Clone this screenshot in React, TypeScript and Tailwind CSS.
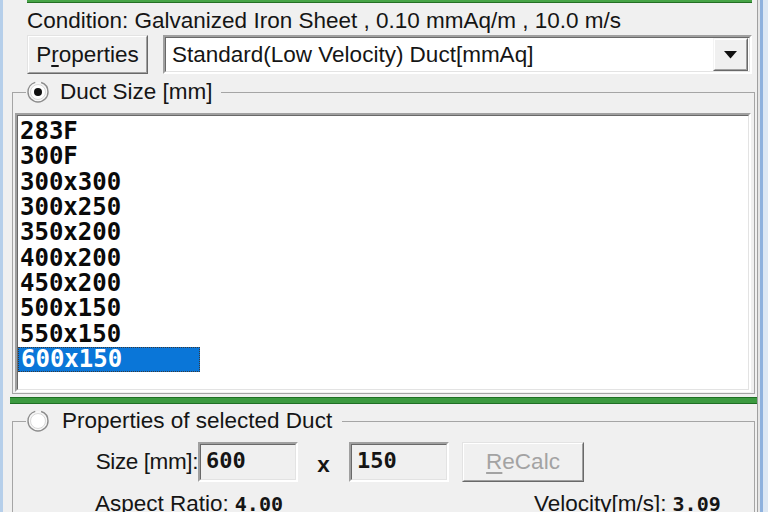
import React from 'react';

const sizes = ['283F', '300F', '300x300', '300x250', '350x200', '400x200', '450x200', '500x150', '550x150', '600x150'];

function Radio({ checked }: { checked?: boolean }) {
  return (
    <svg width="24" height="24" viewBox="0 0 24 24" className="shrink-0">
      <circle cx="12" cy="12" r="10" fill="#f7f7f7" stroke="#8c8c8c" strokeWidth="1.4" strokeDasharray="44 6" />
      <circle cx="12" cy="12" r="7.5" fill="#ffffff" stroke="#d9d9d9" strokeWidth="1" />
      {checked && <circle cx="12" cy="12" r="4" fill="#111111" />}
    </svg>
  );
}

// classic raised 3D push button
function Button({ children, className, disabled }: { children: React.ReactNode; className?: string; disabled?: boolean }) {
  return (
    <div className={`border border-t-[#e3e3e3] border-l-[#e3e3e3] border-r-[#696969] border-b-[#696969] ${className ?? ''}`}>
      <div className={`flex h-full w-full items-center justify-center border border-t-white border-l-white border-r-[#a0a0a0] border-b-[#a0a0a0] bg-[#f0f0f0] ${disabled ? 'text-[#a3a3a3]' : ''}`}>
        {children}
      </div>
    </div>
  );
}

// classic sunken field border
function Sunken({ children, className, inner }: { children: React.ReactNode; className?: string; inner?: string }) {
  return (
    <div className={`border-2 border-t-[#a0a0a0] border-l-[#a0a0a0] border-r-white border-b-white ${className ?? ''}`}>
      <div className={`h-full w-full border border-t-[#696969] border-l-[#696969] border-r-[#e3e3e3] border-b-[#e3e3e3] ${inner ?? ''}`}>
        {children}
      </div>
    </div>
  );
}

const mono = "font-['DejaVu_Sans_Mono',monospace] font-bold";

export default function App() {
  return (
    <div className="flex h-[512px] w-[768px] overflow-hidden bg-[#f0f0f0] font-['Liberation_Sans',Arial,sans-serif] text-[22.5px] leading-[26px] text-[#151515]">
      <div className="w-[3px] shrink-0 bg-[#b6cfea]" />

      <main className="flex w-[754px] shrink-0 flex-col">
        {/* progress strip */}
        <div className="ml-[24px] h-[3px] w-[725px] shrink-0 border-b border-[#236f23] bg-[#47a447]" />

        <div className="ml-[24px] flex h-[32px] shrink-0 items-center pt-[4px] whitespace-nowrap">
          Condition: Galvanized Iron Sheet , 0.10 mmAq/m , 10.0 m/s
        </div>

        <div className="flex h-[39px] shrink-0 items-stretch">
          <Button className="ml-[24px] w-[121px]">
            <span>
              P<span className="underline underline-offset-[3px]">r</span>operties
            </span>
          </Button>
          <Sunken className="ml-[15px] w-[589px]" inner="flex items-center bg-white">
            <span className="flex-1 pl-[6px] whitespace-nowrap">Standard(Low Velocity) Duct[mmAq]</span>
            <div className="mr-[1px] h-full w-[35px] border border-t-[#f4f4f4] border-l-[#f4f4f4] border-r-[#696969] border-b-[#696969]">
              <div className="flex h-full w-full items-center justify-center border border-t-white border-l-white border-r-[#a0a0a0] border-b-[#a0a0a0] bg-[#f0f0f0]">
                <svg width="13" height="8" viewBox="0 0 13 8">
                  <path d="M0 0 H13 L6.5 7.5 Z" fill="#111" />
                </svg>
              </div>
            </div>
          </Sunken>
        </div>

        {/* duct size group */}
        <fieldset className="mt-[6px] ml-[9px] w-[743px] shrink-0 border border-[#a5a5a5] px-[2px] pb-[1px]">
          <legend className="ml-[11px] flex h-[24px] items-center pr-[8px]">
            <Radio checked />
            <span className="ml-[10px]">Duct Size [mm]</span>
          </legend>
          <Sunken className="mt-[9px] h-[279px] w-[736px]" inner="bg-white pt-[3px]">
            {sizes.map((s, i) => {
              const sel = i === sizes.length - 1;
              return (
                <div
                  key={s}
                  className={`flex h-[25.3px] w-[182px] items-center pl-[2px] text-[24px] leading-[25px] ${mono} ${
                    sel ? 'border border-dotted border-[#3a3a3a] bg-[#0a76d8] pl-[1px] text-white' : 'text-[#0a0a0a]'
                  }`}
                >
                  {s}
                </div>
              );
            })}
          </Sunken>
        </fieldset>

        <div className="mt-[3px] ml-[7px] h-[7px] w-[747px] shrink-0 border-y border-[#1f6f24] bg-[#3c9a40]" />

        {/* selected duct group */}
        <fieldset className="mt-[5px] ml-[9px] w-[743px] shrink-0 border border-[#a5a5a5] px-[2px] pb-[20px]">
          <legend className="ml-[11px] flex h-[24px] items-center pr-[10px]">
            <Radio />
            <span className="ml-[12px]">Properties of selected Duct</span>
          </legend>

          <div className="mt-[9px] flex h-[40px] items-stretch">
            <div className="ml-[80px] flex w-[103px] items-center justify-end whitespace-nowrap tracking-[-0.4px]">
              Size [mm]:
            </div>
            <Sunken className="w-[100px]" inner={`flex items-center pl-[5px] pb-[2px] text-[22px] ${mono}`}>
              600
            </Sunken>
            <div className="flex w-[51px] items-center justify-center pt-[6px] font-bold">x</div>
            <Sunken className="w-[100px]" inner={`flex items-center pl-[5px] pb-[2px] text-[22px] ${mono}`}>
              150
            </Sunken>
            <Button className="ml-[13px] w-[122px]" disabled>
              <span>
                <span className="underline underline-offset-[3px]">R</span>eCalc
              </span>
            </Button>
          </div>

          <div className="mt-[9px] flex h-[26px] items-center whitespace-nowrap">
            <div className="ml-[80px] flex w-[439px] items-center">
              Aspect Ratio:<span className={`ml-[6px] text-[20px] ${mono}`}>4.00</span>
            </div>
            <div className="flex items-center">
              Velocity[m/s]:<span className={`ml-[6px] text-[20px] ${mono}`}>3.09</span>
            </div>
          </div>
        </fieldset>
      </main>

      {/* window frame on the right */}
      <div className="w-px shrink-0 bg-[#a0a0a0]" />
      <div className="w-[2px] shrink-0 bg-[#e6e6e6]" />
      <div className="w-[3px] shrink-0 bg-[#8fb2de]" />
      <div className="flex-1 bg-[#dde8f4]" />
    </div>
  );
}
